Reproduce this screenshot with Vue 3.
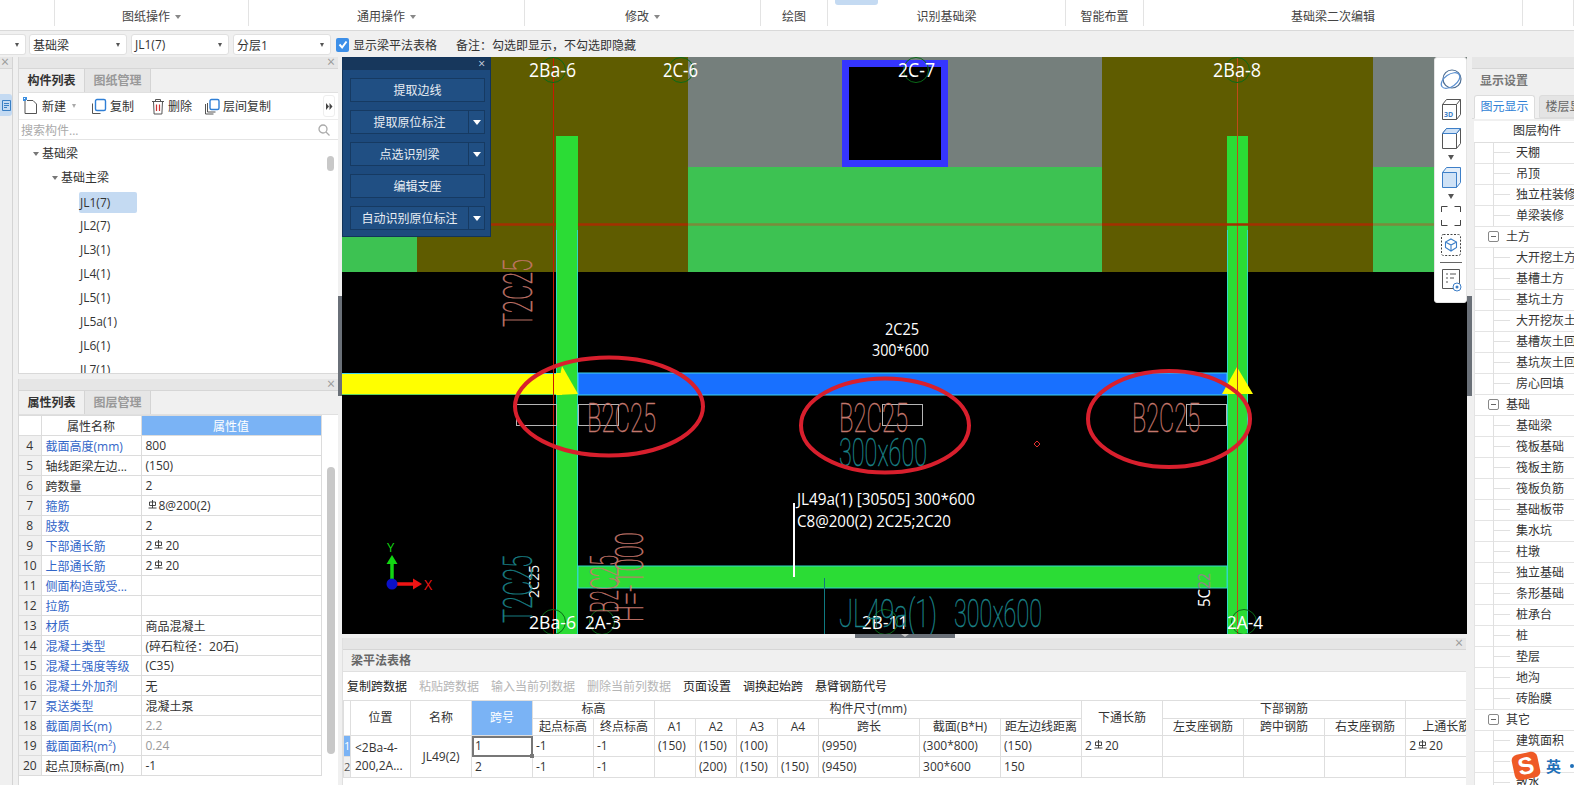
<template>
  <div class="app">
    <!-- ribbon -->
    <div class="ribbon">
      <div v-for="g in ribbonGroups" :key="g.x" class="rb-group" :style="{ width: g.w + 'px' }">
        <span v-if="g.on" class="rb-on"></span>
        <span>{{ g.name }}</span>
        <i v-if="g.arrow" class="rb-caret"></i>
      </div>
    </div>

    <!-- combos -->
    <div class="topbar">
      <div class="combo c0"><i class="caret"></i></div>
      <div class="combo"><span>基础梁</span><i class="caret"></i></div>
      <div class="combo"><span>JL1(7)</span><i class="caret"></i></div>
      <div class="combo"><span>分层1</span><i class="caret"></i></div>
      <span class="check">
        <svg width="12" height="13" viewBox="0 0 12 13"><path d="M2.5 6.5l2.6 3 4.4-6" fill="none" stroke="#fff" stroke-width="2"/></svg>
      </span>
      <span class="check-label">显示梁平法表格</span>
      <span class="remark">备注：勾选即显示，不勾选即隐藏</span>
    </div>

    <div class="main">
      <!-- thin left strip -->
      <div class="strip">
        <div class="titlebar"><span class="x">×</span></div>
        <div class="strip-btn">
          <svg width="9" height="11" viewBox="0 0 9 11"><path d="M.5.5h8v10h-8zM2 3.5h5M2 5.5h5M2 7.5h3" fill="none" stroke="#3a7fc4"/></svg>
        </div>
      </div>

      <!-- left column -->
      <div class="leftcol">
        <section class="panel list-panel">
          <div class="titlebar"><span class="x">×</span></div>
          <div class="tabs">
            <span class="tab active">构件列表</span>
            <span class="tab">图纸管理</span>
          </div>
          <div class="actions">
            <svg class="ico" width="16" height="18" viewBox="0 0 16 18"><path d="M2 3.500h8l3.500 3.500v9.500h-11.500z" fill="#fff" stroke="#555"/><path d="M0 0h4v4H0z" fill="#3d8fe0"/><path d="M1 1h1v1H1zM3 3h1v1H3z" fill="#fff"/></svg>
            <span class="act">新建</span><i class="caret grey"></i>
            <svg class="ico ml-copy" width="16" height="17" viewBox="0 0 16 17"><path d="M1.500 5.500v10h8" fill="none" stroke="#555"/><rect x="4.500" y="1.500" width="10" height="11" rx="1.500" fill="#fff" stroke="#2f7fd6" stroke-width="1.400"/></svg>
            <span class="act">复制</span>
            <svg class="ico ml-del" width="14" height="17" viewBox="0 0 14 17"><path d="M1 3.500h12M4.500 3V1.500h5V3M2.500 3.500l.6 12.500h7.800l.6-12.500z" fill="none" stroke="#555"/><path d="M5.500 6.500v6.500M8.500 6.500v6.500" stroke="#c33" stroke-width="1.200"/></svg>
            <span class="act">删除</span>
            <svg class="ico ml-layer" width="16" height="17" viewBox="0 0 16 17"><path d="M1.500 6v10h8M3.500 5v9h8" fill="none" stroke="#555"/><rect x="6" y="1.500" width="9" height="10" rx="1.500" fill="#fff" stroke="#2f7fd6" stroke-width="1.400"/></svg>
            <span class="act">层间复制</span>
            <span class="more">
              <svg width="7" height="7" viewBox="0 0 7 7"><path d="M0 0l3 3.500-3 3.500zM3.500 0l3 3.500-3 3.500z" fill="#444"/></svg>
            </span>
          </div>
          <div class="search">
            <span>搜索构件...</span>
            <svg width="12" height="12" viewBox="0 0 12 12"><circle cx="5" cy="5" r="4" fill="none" stroke="#aaa" stroke-width="1.300"/><path d="M8 8l3.500 3.500" stroke="#aaa" stroke-width="1.300"/></svg>
          </div>
          <div class="tree">
            <div class="node l0"><i class="tri"></i>基础梁</div>
            <div class="node l1"><i class="tri"></i>基础主梁</div>
            <div v-for="(n, i) in treeItems" :key="n" class="node l2"><span :class="{ picked: i === 0 }">{{ n }}</span></div>
            <span class="tree-thumb"></span>
          </div>
        </section>

        <section class="panel props-panel">
          <div class="titlebar"><span class="x">×</span></div>
          <div class="tabs">
            <span class="tab active">属性列表</span>
            <span class="tab">图层管理</span>
          </div>
          <table class="props">
            <colgroup><col v-for="w in [22, 100, 180]" :key="w" :style="{ width: w + 'px' }" /></colgroup>
            <tbody>
              <tr class="props-head"><th></th><th>属性名称</th><th class="blue-head">属性值</th></tr>
              <tr v-for="r in propRows" :key="r.n">
                <td class="num">{{ r.n }}</td>
                <td class="pname" :class="{ link: r.link }">{{ r.name }}</td>
                <td :class="{ muted: r.muted }">
                  {{ r.pre }}<svg v-if="r.bar" class="bar" width="9" height="9" viewBox="0 0 9 9"><path d="M1.500 2h6v3.500h-6zM4.500 0v8M.5 8h8" fill="none" stroke="#333" stroke-width=".9"/></svg>{{ r.val }}
                </td>
              </tr>
            </tbody>
          </table>
          <span class="props-thumb"></span>
        </section>
      </div>

      <!-- centre -->
      <div class="centre">
        <div class="canvas">
          <svg class="cad" width="1125" height="577" viewBox="342 57 1125 577">
            <rect x="342" y="57" width="1125" height="577" fill="#000" />
            <rect x="342" y="57" width="1125" height="110" fill="#757f7c" />
            <rect x="342" y="167" width="1125" height="105" fill="#3dc252" />
            <rect x="417" y="57" width="271" height="215" fill="#5f5c00" />
            <rect x="1102" y="57" width="271" height="215" fill="#5f5c00" />
            <rect x="845.500" y="63.500" width="99" height="100" fill="#000" stroke="#3535ff" stroke-width="7" />

            <rect x="556" y="136" width="22" height="498" fill="#2bdc35" />
            <rect x="1227" y="136" width="21" height="498" fill="#2bdc35" />
            <path d="M556.500 230V634M577.500 230V634M1227.500 230V634M1247.500 230V634" stroke="#30d8c8" />

            <rect x="578" y="373" width="649" height="22" fill="#1870ff" stroke="#3fd5ee" />
            <rect x="342" y="373" width="220" height="22" fill="#ffff00" />
            <path d="M342 373.500H556" stroke="#3fd5ee" />
            <path d="M342 394.500H556" stroke="#5fd060" />
            <rect x="578" y="566" width="649" height="22" fill="#2bdc35" stroke="#30d8c8" />
            <path d="M562 366L578 394L556 395Z" fill="#ffff00" />
            <path d="M1237 367L1253 394H1222Z" fill="#ffff00" />

            <path d="M553.500 57V634" stroke="#c81a00" />
            <path d="M1237.500 57V634" stroke="#c04a18" />
            <path d="M342 224.500H417M688 224.500H1102M1373 224.500H1434" stroke="#7b8b3b" stroke-width="2.500" />
            <path d="M417 224.500H556M578 224.500H688M1102 224.500H1373" stroke="#a33000" stroke-width="2.500" />

            <rect v-for="b in boxes" :key="b" :x="b" y="404.500" width="40" height="21" fill="none" stroke="#b5b5b5" />
            <path d="M1037 441l3 3-3 3-3-3z" fill="none" stroke="#e03030" />
            <path d="M824.500 578V634" stroke="#0f7a80" />
            <path d="M794 503V577" stroke="#fff" stroke-width="2" />

            <circle v-for="c in axisMarks" :key="c.x + '-' + c.y" :cx="c.x" :cy="c.y" r="12.500" fill="none" stroke="#0a6a18" />

            <text
              v-for="t in cadTexts"
              :key="t.t + t.x + t.y"
              class="cad-text"
              :class="{ thin: t.thin }"
              :x="t.x"
              :y="t.y"
              :fill="t.c"
              :stroke="t.thin ? t.c : undefined"
              :font-size="t.s"
              :textLength="t.w"
              lengthAdjust="spacingAndGlyphs"
              :transform="t.rot ? `rotate(-90 ${t.x} ${t.y})` : undefined"
            >{{ t.t }}</text>

            <!-- axes -->
            <path d="M392 584V563" stroke="#12d612" stroke-width="3.500" />
            <path d="M392 555l5.500 9h-11z" fill="#12d612" />
            <path d="M392 584h22" stroke="#f01414" stroke-width="3.500" />
            <path d="M422 584l-9 5.500v-11z" fill="#f01414" />
            <circle cx="392" cy="584" r="5.500" fill="#0a10c8" />
            <text class="cad-text" x="387" y="552" font-size="13" fill="#12d612">Y</text>
            <text class="cad-text" x="424" y="590" font-size="14" fill="#f01414">X</text>

            <ellipse cx="609" cy="406.500" rx="94" ry="49" fill="none" stroke="#d81f2d" stroke-width="4" />
            <ellipse cx="885" cy="425.500" rx="84" ry="47" fill="none" stroke="#d81f2d" stroke-width="4" />
            <ellipse cx="1169" cy="419" rx="81" ry="48" fill="none" stroke="#d81f2d" stroke-width="4" />
          </svg>

          <!-- floating recognition panel -->
          <div class="float">
            <div class="float-head"><span>×</span></div>
            <div v-for="b in floatButtons" :key="b.t" class="float-btn">
              <span class="float-main">{{ b.t }}</span>
              <span v-if="b.split" class="float-split"><i></i></span>
            </div>
          </div>

          <!-- view tool strip -->
          <div class="viewtools">
            <svg width="24" height="24" viewBox="0 0 24 24"><circle cx="13" cy="11" r="9" fill="none" stroke="#4f6f94" stroke-width="1.200"/><ellipse cx="11.500" cy="12.500" rx="10.500" ry="6" transform="rotate(-35 11.500 12.500)" fill="none" stroke="#5a8fd0" stroke-width="1.200"/></svg>
            <svg width="24" height="24" viewBox="0 0 24 24"><path d="M3.500 7.500h14v15h-14zM3.500 7.500l4-5h14v15l-4 5M17.500 7.500l4-5" fill="none" stroke="#555"/><text x="5" y="19.500" font-size="7" font-family="Open Sans" font-weight="700" fill="#3d7fc8">3D</text></svg>
            <svg width="24" height="24" viewBox="0 0 24 24"><path d="M3.500 7.500h14v15h-14zM3.500 7.500l4-5h14v15l-4 5M17.500 7.500l4-5" fill="none" stroke="#555"/><path d="M3.500 7.500l4-5h14l-4 5z" fill="#cfe2f6" stroke="#3d7fc8"/></svg>
            <i class="vt-caret"></i>
            <svg width="24" height="24" viewBox="0 0 24 24"><path d="M3.500 7.500h14v15h-14z" fill="#cfe2f6" stroke="#3d7fc8"/><path d="M3.500 7.500l4-5h14v15l-4 5V7.500z" fill="#e4eef9" stroke="#3d7fc8"/></svg>
            <i class="vt-caret"></i>
            <svg width="24" height="24" viewBox="0 0 24 24"><path d="M2.500 8V2.500h6M15.500 2.500h6V8M21.500 16v5.500h-6M8.500 21.500h-6V16" fill="none" stroke="#444"/></svg>
            <svg width="24" height="24" viewBox="0 0 24 24"><rect x="2.500" y="1.500" width="19" height="21" rx="2" fill="none" stroke="#444" stroke-dasharray="2 1.500"/><path d="M12 6l5.500 3v5.500L12 18l-5.500-3.500V9zM6.500 9l5.500 3 5.500-3M12 12v6" fill="none" stroke="#3d7fc8" stroke-width="1.100"/></svg>
            <span class="vt-line"></span>
            <svg width="24" height="24" viewBox="0 0 24 24"><path d="M3.500 1.500h17v19h-17z" fill="none" stroke="#555"/><path d="M7 6h2M7 10h2M7 14h2M11 6h6M11 10h4" stroke="#555"/><circle cx="18" cy="19" r="4" fill="#fff" stroke="#3d7fc8"/><circle cx="18" cy="19" r="1.500" fill="#3d7fc8"/></svg>
          </div>

          <span class="handle bottom"><i></i></span>
        </div>

        <!-- bottom table panel -->
        <section class="sheet">
          <div class="titlebar"><span class="x">×</span></div>
          <div class="sheet-title">梁平法表格</div>
          <div class="sheet-tools">
            <span v-for="a in sheetActions" :key="a.t" :class="{ off: a.off }">{{ a.t }}</span>
          </div>
          <div class="sheet-clip">
            <table class="grid">
              <colgroup><col v-for="(w, i) in sheetCols" :key="i" :style="{ width: w + 'px' }" /></colgroup>
              <thead>
                <tr>
                  <th rowspan="2"></th>
                  <th rowspan="2">位置</th>
                  <th rowspan="2">名称</th>
                  <th rowspan="2" class="hot">跨号</th>
                  <th colspan="2">标高</th>
                  <th colspan="7">构件尺寸(mm)</th>
                  <th rowspan="2">下通长筋</th>
                  <th colspan="3">下部钢筋</th>
                  <th></th>
                </tr>
                <tr>
                  <th v-for="h in subHeads" :key="h">{{ h }}</th>
                </tr>
              </thead>
              <tbody>
                <tr>
                  <td class="idx on">1</td>
                  <td rowspan="2" class="wrap">&lt;2Ba-4-<br />200,2A...</td>
                  <td rowspan="2" class="center">JL49(2)</td>
                  <td class="sel">1<i></i></td>
                  <td v-for="(c, i) in rowOne" :key="i">{{ c }}</td>
                  <td>2<svg class="bar" width="9" height="9" viewBox="0 0 9 9"><path d="M1.500 2h6v3.500h-6zM4.500 0v8M.5 8h8" fill="none" stroke="#333" stroke-width=".9"/></svg>20</td>
                  <td></td><td></td><td></td>
                  <td>2<svg class="bar" width="9" height="9" viewBox="0 0 9 9"><path d="M1.500 2h6v3.500h-6zM4.500 0v8M.5 8h8" fill="none" stroke="#333" stroke-width=".9"/></svg>20</td>
                </tr>
                <tr>
                  <td class="idx">2</td>
                  <td>2</td>
                  <td v-for="(c, i) in rowTwo" :key="i">{{ c }}</td>
                  <td></td><td></td><td></td><td></td><td></td>
                </tr>
              </tbody>
            </table>
          </div>
        </section>
      </div>

      <span class="handle side"></span>

      <!-- right display settings -->
      <aside class="layers">
        <div class="titlebar"></div>
        <div class="layers-title">显示设置</div>
        <div class="layers-tabs">
          <span class="ltab active">图元显示</span>
          <span class="ltab">楼层显示</span>
        </div>
        <div class="layers-head">图层构件</div>
        <div v-for="(l, i) in layerRows" :key="i" class="lrow" :class="{ group: l.group }">
          <span v-if="l.group" class="minus"></span>
          <span v-else class="guide"></span>
          {{ l.t }}
        </div>
      </aside>
    </div>

    <span class="handle left"></span>

    <!-- input method badge -->
    <div class="ime">
      <span class="ime-s">S</span>
      <span class="ime-en">英</span>
      <span class="ime-dot"></span>
    </div>
  </div>
</template>

<script setup>
const ribbonGroups = [
  { x: 0, w: 55, name: '' },
  { x: 1, w: 194, name: '图纸操作', arrow: true },
  { x: 2, w: 276, name: '通用操作', arrow: true },
  { x: 3, w: 236, name: '修改', arrow: true },
  { x: 4, w: 67, name: '绘图' },
  { x: 5, w: 238, name: '识别基础梁', on: true },
  { x: 6, w: 78, name: '智能布置' },
  { x: 7, w: 379, name: '基础梁二次编辑' },
  { x: 8, w: 51, name: '' },
]

const treeItems = ['JL1(7)', 'JL2(7)', 'JL3(1)', 'JL4(1)', 'JL5(1)', 'JL5a(1)', 'JL6(1)', 'JL7(1)']

const propRows = [
  { n: 4, name: '截面高度(mm)', link: true, val: '800' },
  { n: 5, name: '轴线距梁左边...', val: '(150)' },
  { n: 6, name: '跨数量', val: '2' },
  { n: 7, name: '箍筋', link: true, bar: true, val: '8@200(2)' },
  { n: 8, name: '肢数', link: true, val: '2' },
  { n: 9, name: '下部通长筋', link: true, pre: '2', bar: true, val: '20' },
  { n: 10, name: '上部通长筋', link: true, pre: '2', bar: true, val: '20' },
  { n: 11, name: '侧面构造或受...', link: true, val: '' },
  { n: 12, name: '拉筋', link: true, val: '' },
  { n: 13, name: '材质', link: true, val: '商品混凝土' },
  { n: 14, name: '混凝土类型', link: true, val: '(碎石粒径：20石)' },
  { n: 15, name: '混凝土强度等级', link: true, val: '(C35)' },
  { n: 16, name: '混凝土外加剂', link: true, val: '无' },
  { n: 17, name: '泵送类型', link: true, val: '混凝土泵' },
  { n: 18, name: '截面周长(m)', link: true, val: '2.2', muted: true },
  { n: 19, name: '截面面积(m²)', link: true, val: '0.24', muted: true },
  { n: 20, name: '起点顶标高(m)', val: '-1' },
]

const boxes = [516.5, 578.5, 882.5, 1186.5]

const axisMarks = [
  { x: 553, y: 70 }, { x: 681, y: 70 }, { x: 916, y: 70 }, { x: 1237, y: 70 },
  { x: 553, y: 622 }, { x: 602, y: 622 }, { x: 885, y: 622 }, { x: 1244, y: 622 },
]

const white = '#fff'
const salmon = '#c4776c'
const teal = '#1a8288'

const cadTexts = [
  { t: '2Ba-6', x: 529, y: 77, w: 47, s: 20, c: white },
  { t: '2C-6', x: 663, y: 77, w: 35, s: 20, c: white },
  { t: '2C-7', x: 898, y: 77, w: 37, s: 20, c: white },
  { t: '2Ba-8', x: 1213, y: 77, w: 48, s: 20, c: white },
  { t: '2Ba-6', x: 529, y: 629, w: 47, s: 19, c: white },
  { t: '2A-3', x: 585, y: 629, w: 36, s: 19, c: white },
  { t: '2B-11', x: 862, y: 629, w: 46, s: 19, c: white },
  { t: '2A-4', x: 1227, y: 629, w: 36, s: 19, c: white },
  { t: '2C25', x: 885, y: 335, w: 34, s: 16, c: white },
  { t: '300*600', x: 872, y: 356, w: 57, s: 16, c: white },
  { t: 'JL49a(1) [30505] 300*600', x: 797, y: 505, w: 178, s: 16, c: white },
  { t: 'C8@200(2) 2C25;2C20', x: 797, y: 527, w: 154, s: 16, c: white },
  { t: '2C25', x: 539, y: 598, w: 33, s: 15, c: white, rot: true },
  { t: '5C', x: 1210, y: 607, w: 18, s: 16, c: white, rot: true },
  { t: '22', x: 1210, y: 589, w: 16, s: 16, c: '#9a7f90', rot: true },
  { t: 'B2C25', x: 587, y: 432, w: 69, s: 40, c: salmon, thin: true },
  { t: 'B2C25', x: 839, y: 432, w: 69, s: 40, c: salmon, thin: true },
  { t: 'B2C25', x: 1132, y: 432, w: 68, s: 40, c: salmon, thin: true },
  { t: '300x600', x: 839, y: 466, w: 88, s: 38, c: teal, thin: true },
  { t: 'JL49a(1)', x: 839, y: 627, w: 98, s: 38, c: teal, thin: true },
  { t: '300x600', x: 954, y: 627, w: 88, s: 38, c: teal, thin: true },
  { t: 'T2C25', x: 532, y: 327, w: 68, s: 40, c: salmon, thin: true, rot: true },
  { t: 'T2C25', x: 532, y: 623, w: 68, s: 40, c: teal, thin: true, rot: true },
  { t: 'B2C25', x: 618, y: 613, w: 58, s: 38, c: salmon, thin: true, rot: true },
  { t: 'H=-1000', x: 643, y: 622, w: 90, s: 38, c: salmon, thin: true, rot: true },
]

const floatButtons = [
  { t: '提取边线' },
  { t: '提取原位标注', split: true },
  { t: '点选识别梁', split: true },
  { t: '编辑支座' },
  { t: '自动识别原位标注', split: true },
]

const sheetActions = [
  { t: '复制跨数据' },
  { t: '粘贴跨数据', off: true },
  { t: '输入当前列数据', off: true },
  { t: '删除当前列数据', off: true },
  { t: '页面设置' },
  { t: '调换起始跨' },
  { t: '悬臂钢筋代号' },
]

const sheetCols = [7, 60, 61, 61, 61, 61, 41, 41, 41, 41, 101, 81, 81, 81, 81, 81, 81, 81]
const subHeads = ['起点标高', '终点标高', 'A1', 'A2', 'A3', 'A4', '跨长', '截面(B*H)', '距左边线距离', '左支座钢筋', '跨中钢筋', '右支座钢筋', '上通长筋']
const rowOne = ['-1', '-1', '(150)', '(150)', '(100)', '', '(9950)', '(300*800)', '(150)']
const rowTwo = ['-1', '-1', '', '(200)', '(150)', '(150)', '(9450)', '300*600', '150']

const layerRows = [
  '天棚', '吊顶', '独立柱装修', '单梁装修',
  { t: '土方', group: true },
  '大开挖土方', '基槽土方', '基坑土方', '大开挖灰土回填', '基槽灰土回填', '基坑灰土回填', '房心回填',
  { t: '基础', group: true },
  '基础梁', '筏板基础', '筏板主筋', '筏板负筋', '基础板带', '集水坑', '柱墩', '独立基础', '条形基础', '桩承台', '桩', '垫层', '地沟', '砖胎膜',
  { t: '其它', group: true },
  '建筑面积', '', '散水',
].map((l) => (typeof l === 'string' ? { t: l } : l))
</script>

<style>
html, body { margin: 0; background: #f0f0f0; overflow: hidden; }
</style>

<style scoped>
.app {
  position: relative;
  width: 1574px;
  height: 785px;
  overflow: hidden;
  display: flex;
  flex-direction: column;
  background: #f0f0f0;
  color: #333;
  font-family: "Open Sans", "Noto Sans CJK SC", sans-serif;
  font-size: 12px;
}

/* ribbon */
.ribbon {
  height: 30px;
  display: flex;
  flex: none;
  background: #fff;
  border-bottom: 1px solid #d9d9d9;
}
.rb-group {
  position: relative;
  height: 26px;
  padding-top: 8px;
  box-sizing: border-box;
  flex: none;
  display: flex;
  justify-content: center;
  align-items: center;
  gap: 5px;
  line-height: 18px;
  color: #444;
  border-right: 1px solid #e3e3e3;
}
.rb-on {
  position: absolute;
  left: 7px;
  top: 0;
  width: 43px;
  height: 5px;
  border-radius: 0 0 3px 3px;
  background: #c4daf2;
}
.rb-caret {
  width: 0;
  height: 0;
  border-left: 3.5px solid transparent;
  border-right: 3.5px solid transparent;
  border-top: 4px solid #888;
}

/* combos */
.topbar {
  height: 26px;
  flex: none;
  display: flex;
  align-items: center;
  padding-top: 1px;
  box-sizing: border-box;
}
.combo {
  width: 98px;
  height: 21px;
  box-sizing: border-box;
  margin-right: 4px;
  padding: 0 6px 0 3px;
  display: flex;
  align-items: center;
  justify-content: space-between;
  background: #fff;
  border: 1px solid #e0e0e0;
  border-radius: 3px;
}
.combo.c0 {
  width: 26px;
  margin-right: 3px;
  justify-content: flex-end;
  border-left: 0;
  border-radius: 0 3px 3px 0;
}
.caret {
  width: 0;
  height: 0;
  border-left: 2.5px solid transparent;
  border-right: 2.5px solid transparent;
  border-top: 4px solid #555;
}
.caret.grey { border-top-color: #aaa; margin: 0 0 0 6px; }
.check {
  width: 13px;
  height: 14px;
  margin-left: 1px;
  display: flex;
  align-items: center;
  justify-content: center;
  background: #3d8fe8;
  border-radius: 2px;
}
.check-label { margin-left: 4px; }
.remark { margin-left: 19px; }

/* main row */
.main {
  flex: 1;
  display: flex;
  min-height: 0;
}
.titlebar {
  height: 11px;
  flex: none;
  position: relative;
  background: #e6e6e6;
  border-bottom: 1px solid #d6d6d6;
}
.x {
  position: absolute;
  right: 3px;
  top: -3px;
  font-size: 14px;
  line-height: 16px;
  color: #9a9a9a;
}
.strip {
  width: 13px;
  flex: none;
  box-sizing: border-box;
  border-right: 1px solid #d4d4d4;
}
.strip-btn {
  margin-top: 25px;
  width: 12px;
  height: 22px;
  display: flex;
  align-items: center;
  justify-content: center;
  background: #c4daf2;
  border-radius: 0 3px 3px 0;
}
.leftcol {
  width: 320px;
  margin-left: 5px;
  margin-right: 4px;
  flex: none;
  display: flex;
  flex-direction: column;
  gap: 5px;
}
.panel {
  position: relative;
  background: #fff;
  display: flex;
  flex-direction: column;
  border-left: 1px solid #d9d9d9;
}
.list-panel {
  height: 316px;
  border-bottom: 1px solid #d9d9d9;
}
.props-panel {
  flex: 1;
  min-height: 0;
  overflow: hidden;
}
.tabs {
  height: 23px;
  flex: none;
  display: flex;
  background: #f0f0f0;
  border-bottom: 1px solid #e0e0e0;
}
.tab {
  width: 65px;
  text-align: center;
  line-height: 24px;
  font-weight: 700;
  color: #999;
  background: #e6e6e6;
  border-right: 1px solid #d4d4d4;
}
.tab.active {
  color: #333;
  background: #f0f0f0;
}
.actions {
  height: 26px;
  flex: none;
  display: flex;
  align-items: center;
  padding-left: 4px;
  position: relative;
  border-bottom: 1px solid #ececec;
}
.ico { flex: none; }
.ml-copy { margin-left: 15px; }
.ml-del { margin-left: 17px; }
.ml-layer { margin-left: 12px; }
.act { margin-left: 3px; }
.more {
  position: absolute;
  right: 3px;
  top: 2px;
  width: 10px;
  height: 20px;
  display: flex;
  align-items: center;
  justify-content: center;
  border: 1px solid #eee;
  border-radius: 3px;
}
.search {
  height: 19px;
  flex: none;
  display: flex;
  justify-content: space-between;
  align-items: center;
  padding: 0 8px 0 2px;
  color: #aaa;
  border-bottom: 1px solid #e4e4e4;
}
.tree {
  position: relative;
  flex: 1;
  overflow: hidden;
  padding-top: 2px;
}
.node {
  height: 24px;
  line-height: 24px;
  display: flex;
  align-items: center;
  white-space: nowrap;
}
.l0 { padding-left: 14px; }
.l1 { padding-left: 33px; }
.l2 { padding-left: 61px; }
.tri {
  width: 0;
  height: 0;
  margin-right: 3px;
  border-left: 3px solid transparent;
  border-right: 3px solid transparent;
  border-top: 4px solid #777;
}
.picked {
  display: block;
  width: 58px;
  margin-left: -1px;
  padding-left: 1px;
  box-sizing: border-box;
  height: 21px;
  line-height: 21px;
  background: #c4daf2;
  border-radius: 2px;
}
.tree-thumb {
  position: absolute;
  left: 308px;
  top: 16px;
  width: 7px;
  height: 15px;
  border-radius: 4px;
  background: #c8c8c8;
}

/* properties */
.props {
  width: 302px;
  table-layout: fixed;
  border-collapse: collapse;
}
.props td, .props th {
  height: 20px;
  padding: 0 4px;
  box-sizing: border-box;
  border: 1px solid #dcdcdc;
  border-left: 0;
  white-space: nowrap;
  overflow: hidden;
  font-weight: 400;
}
.props-head th { text-align: center; }
.blue-head { background: #7ab3f5; color: #fff; }
.num {
  background: #f0f0f0;
  text-align: center;
  padding: 0 !important;
}
.pname.link { color: #3266c8; }
.muted { color: #999; }
.bar {
  margin: 0 2px;
  vertical-align: 1px;
}
.props-thumb {
  position: absolute;
  left: 308px;
  top: 88px;
  width: 8px;
  height: 287px;
  border-radius: 4px;
  background: #c8c8c8;
}

/* canvas */
.centre {
  width: 1125px;
  flex: none;
  display: flex;
  flex-direction: column;
  gap: 4px;
}
.canvas {
  position: relative;
  height: 577px;
  flex: none;
}
.cad { display: block; }
.cad-text {
  font-family: "Open Sans", sans-serif;
}
.cad-text.thin {
  font-family: Roboto, sans-serif;
  font-weight: 100;
  stroke-width: .45;
}
.float {
  position: absolute;
  left: 0;
  top: 0;
  width: 149px;
  height: 180px;
  box-sizing: border-box;
  background: #1d4a7d;
  border: 1px solid #12345a;
}
.float-head {
  height: 12px;
  margin-bottom: 8px;
  background: #17375c;
  color: #cfd8e2;
  text-align: right;
  padding-right: 5px;
  font-size: 12px;
  line-height: 12px;
}
.float-btn {
  height: 24px;
  margin: 0 5px 8px 7px;
  display: flex;
  color: #e8edf3;
  line-height: 23px;
  border: 1px solid #163a62;
  box-sizing: border-box;
  background: #204f83;
}
.float-main {
  flex: 1;
  text-align: center;
}
.float-split {
  width: 15px;
  flex: none;
  display: flex;
  align-items: center;
  justify-content: center;
  border-left: 1px solid #163a62;
}
.float-split i {
  width: 0;
  height: 0;
  border-left: 4px solid transparent;
  border-right: 4px solid transparent;
  border-top: 5px solid #fff;
}
.viewtools {
  position: absolute;
  left: 1092px;
  top: 0;
  width: 33px;
  height: 246px;
  box-sizing: border-box;
  padding-top: 10px;
  display: flex;
  flex-direction: column;
  align-items: center;
  gap: 5px;
  background: #fff;
  border-radius: 3px;
  border: 1px solid #e4e4e4;
}
.viewtools svg { flex: none; }
.vt-caret {
  width: 0;
  height: 0;
  flex: none;
  border-left: 3.5px solid transparent;
  border-right: 3.5px solid transparent;
  border-top: 5px solid #555;
}
.vt-line {
  width: 22px;
  height: 1px;
  flex: none;
  background: #666;
}
.handle {
  position: absolute;
  background: #6a7078;
}
.handle.bottom {
  left: 513px;
  bottom: -4px;
  width: 100px;
  height: 4px;
}
.handle.bottom i {
  position: absolute;
  left: 46px;
  top: 0;
  width: 0;
  height: 0;
  border-left: 4px solid transparent;
  border-right: 4px solid transparent;
  border-top: 3px solid #c5c5c5;
}
.handle.side {
  left: 1467px;
  top: 296px;
  width: 5px;
  height: 100px;
}
.handle.left {
  left: 338px;
  top: 296px;
  width: 4px;
  height: 100px;
}

/* sheet */
.sheet {
  flex: 1;
  min-height: 0;
  display: flex;
  flex-direction: column;
  background: #fff;
  border-left: 1px solid #e0e0e0;
  margin-right: 1px;
}
.sheet-title {
  height: 21px;
  flex: none;
  padding-left: 8px;
  line-height: 22px;
  font-weight: 700;
  color: #666;
  background: #f0f0f0;
  border-bottom: 1px solid #e0e0e0;
}
.sheet-tools {
  height: 28px;
  flex: none;
  display: flex;
  align-items: center;
  gap: 12px;
  padding-left: 4px;
  color: #222;
}
.sheet-tools .off { color: #b5b5b5; }
.sheet-clip {
  flex: 1;
  overflow: hidden;
}
.grid {
  width: 1143px;
  table-layout: fixed;
  border-collapse: collapse;
}
.grid th, .grid td {
  padding: 0 3px;
  box-sizing: border-box;
  border: 1px solid #dedede;
  white-space: nowrap;
  overflow: hidden;
  font-weight: 400;
  text-align: left;
}
.grid th {
  height: 17.5px;
  line-height: 16px;
  text-align: center;
}
.grid td { height: 21px; line-height: 20px; }
.grid .hot { background: #7ab3f5; color: #fff; }
.grid .wrap {
  line-height: 18px;
  padding-left: 4px;
}
.grid .center { text-align: center; }
.grid .idx {
  padding: 0;
  text-align: center;
  background: #f0f0f0;
  font-size: 11px;
  color: #555;
}
.grid .idx.on { background: #7ab3f5; color: #fff; }
.grid .sel {
  position: relative;
  outline: 2px solid #777;
  outline-offset: -2px;
  overflow: visible;
}
.grid .sel i {
  position: absolute;
  right: -2px;
  bottom: -2px;
  width: 4px;
  height: 4px;
  background: #777;
}

/* right panel */
.layers {
  margin-left: 5px;
  flex: 1;
  min-width: 0;
  overflow: hidden;
  white-space: nowrap;
}
.layers-title {
  height: 24px;
  line-height: 24px;
  padding-left: 8px;
  font-weight: 700;
  color: #777;
}
.layers-tabs {
  height: 26px;
  padding: 2px 0 0 2px;
  box-sizing: border-box;
  display: flex;
  gap: 4px;
  border-bottom: 1px solid #dcdcdc;
}
.ltab {
  width: 61px;
  flex: none;
  box-sizing: border-box;
  line-height: 22px;
  text-align: center;
  color: #666;
  background: #e4e4e4;
  border-radius: 3px 3px 0 0;
  border: 1px solid #dcdcdc;
}
.ltab.active {
  color: #2f7fd6;
  background: #fff;
  border-bottom-color: #fff;
  margin-bottom: -1px;
}
.layers-head {
  height: 21px;
  margin: 2px 0 0 2px;
  line-height: 20px;
  padding-left: 39px;
  background: #fff;
  border-bottom: 1px solid #dedede;
}
.lrow {
  position: relative;
  height: 21px;
  box-sizing: border-box;
  margin-left: 2px;
  padding-left: 41px;
  line-height: 20px;
  background: #fff;
  border-bottom: 1px solid #e4e4e4;
  border-left: 1px solid #e4e4e4;
}
.lrow.group { padding-left: 31px; }
.guide {
  position: absolute;
  left: 18px;
  top: -1px;
  width: 16px;
  height: 21px;
  border-left: 1px solid #e0e0e0;
  background: linear-gradient(#e0e0e0, #e0e0e0) 0 10px / 100% 1px no-repeat;
}
.minus {
  position: absolute;
  left: 13px;
  top: 4px;
  width: 11px;
  height: 11px;
  box-sizing: border-box;
  border: 1px solid #888;
  border-radius: 2px;
}
.minus::after {
  content: "";
  position: absolute;
  left: 2px;
  top: 4px;
  width: 5px;
  height: 1px;
  background: #666;
}

/* input method badge */
.ime {
  position: absolute;
  left: 1513px;
  top: 752px;
  width: 61px;
  height: 28px;
  display: flex;
  align-items: center;
}
.ime-s {
  width: 26px;
  height: 26px;
  flex: none;
  border-radius: 6px;
  transform: rotate(-12deg);
  background: #ef5a26;
  color: #fff;
  font: 900 24px/26px "Liberation Sans", sans-serif;
  text-align: center;
}
.ime-en {
  margin-left: 7px;
  font: 700 15px/20px "Noto Sans CJK SC", sans-serif;
  color: #1f6fb8;
}
.ime-dot {
  width: 4px;
  height: 4px;
  margin-left: 9px;
  border-radius: 50%;
  background: #1f6fb8;
}
</style>
